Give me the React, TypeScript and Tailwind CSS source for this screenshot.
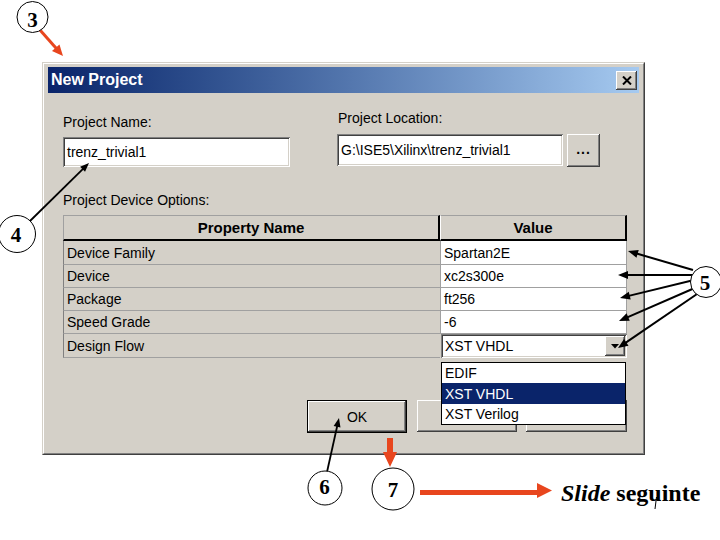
import React from "react";

const raised =
  "bg-[#d4d0c8] shadow-[inset_-1px_-1px_#404040,inset_1px_1px_#ffffff,inset_-2px_-2px_#808080,inset_2px_2px_#d4d0c8]";
const sunken =
  "bg-white shadow-[inset_1px_1px_#808080,inset_-1px_-1px_#ffffff,inset_2px_2px_#404040,inset_-2px_-2px_#d4d0c8]";

function Arrow({
  x1,
  y1,
  x2,
  y2,
  color,
  w,
  len,
  hw,
}: {
  x1: number;
  y1: number;
  x2: number;
  y2: number;
  color: string;
  w: number;
  len: number;
  hw: number;
}) {
  const dx = x2 - x1;
  const dy = y2 - y1;
  const d = Math.sqrt(dx * dx + dy * dy);
  const ux = dx / d;
  const uy = dy / d;
  const bx = x2 - ux * len;
  const by = y2 - uy * len;
  const px = -uy;
  const py = ux;
  const pts = `${x2},${y2} ${bx + px * hw},${by + py * hw} ${bx - px * hw},${by - py * hw}`;
  return (
    <g>
      <line x1={x1} y1={y1} x2={bx + ux * 1} y2={by + uy * 1} stroke={color} strokeWidth={w} />
      <polygon points={pts} fill={color} />
    </g>
  );
}

function Badge({ cx, cy, r, label, tx, ty }: { cx: number; cy: number; r: number; label: string; tx: number; ty: number }) {
  return (
    <g>
      <circle cx={cx} cy={cy} r={r} fill="white" stroke="black" strokeWidth={1} />
      <text
        x={tx}
        y={ty}
        textAnchor="middle"
        fontFamily="'Liberation Serif', 'Times New Roman', serif"
        fontWeight="bold"
        fontSize={21}
        fill="black"
      >
        {label}
      </text>
    </g>
  );
}

const rows: { name: string; value: string; h: string }[] = [
  { name: "Device Family", value: "Spartan2E", h: "h-[24px]" },
  { name: "Device", value: "xc2s300e", h: "h-[23px]" },
  { name: "Package", value: "ft256", h: "h-[23px]" },
  { name: "Speed Grade", value: "-6", h: "h-[23px]" },
];

export default function App() {
  const red = "#e8461e";
  return (
    <div className="relative w-[720px] h-[540px] overflow-hidden bg-white text-black font-['Liberation_Sans',Arial,sans-serif] text-[14px] leading-[16px]">
      <div className="pt-[62px] pl-[42px]">
        {/* dialog */}
        <div className="w-[603px] h-[393px] bg-[#d4d0c8] border border-t-[#d4d0c8] border-l-[#d4d0c8] border-r-[#404040] border-b-[#404040]">
          <div className="h-full border border-t-white border-l-white border-r-[#808080] border-b-[#808080] pt-[3px] px-[4px]">
            {/* title bar */}
            <div className="h-[26px] flex items-center justify-between pl-[3px] pr-[2px] bg-linear-to-r from-[#0a246a] to-[#a6caf0]">
              <span className="text-white font-bold text-[16px]">New Project</span>
              <div className={`w-[21px] h-[19px] flex items-center justify-center ${raised}`}>
                <svg width="10" height="9" viewBox="0 0 10 9">
                  <path d="M1 0.5 L9 8.5 M9 0.5 L1 8.5" stroke="black" strokeWidth="2" />
                </svg>
              </div>
            </div>

            {/* content */}
            <div className="pl-[15px]">
              <div className="flex">
                <div className="w-[227px] pt-[21px]">
                  <div>Project Name:</div>
                  <div className={`mt-[7px] h-[30px] flex items-center pl-[4px] ${sunken}`}>trenz_trivial1</div>
                </div>
                <div className="ml-[47px] pt-[17px]">
                  <div className="pl-[1px]">Project Location:</div>
                  <div className="mt-[8px] flex items-start">
                    <div className={`w-[226px] h-[32px] flex items-center pl-[4px] ${sunken}`}>
                      G:\ISE5\Xilinx\trenz_trivial1
                    </div>
                    <div className={`ml-[4px] w-[33px] h-[33px] flex items-center justify-center font-bold ${raised}`}>
                      <span className="tracking-[1px] -mt-[4px]">...</span>
                    </div>
                  </div>
                </div>
              </div>

              <div className="mt-[25px]">Project Device Options:</div>

              {/* table */}
              <div className="relative mt-[7px] w-[564px]">
                <div className="flex h-[26px]">
                  <div className="w-[377px] flex items-center justify-center font-bold text-[15px] bg-[#d4d0c8] border-t border-l border-t-[#a0a0a0] border-l-[#a0a0a0] border-r-2 border-b-2 border-r-black border-b-black">
                    Property Name
                  </div>
                  <div className="w-[187px] flex items-center justify-center font-bold text-[15px] bg-[#d4d0c8] border-t border-l border-t-[#a0a0a0] border-l-white border-r-2 border-b-2 border-r-black border-b-black">
                    Value
                  </div>
                </div>
                {rows.map((r) => (
                  <div key={r.name} className={`flex ${r.h}`}>
                    <div className="w-[377px] flex items-center pl-[3px] border-l border-b border-l-[#808080] border-b-[#a0a0a0]">
                      {r.name}
                    </div>
                    <div className="w-[187px] flex items-center pl-[3px] bg-white border-l border-b border-r border-l-[#a0a0a0] border-b-[#a0a0a0] border-r-[#a0a0a0]">
                      {r.value}
                    </div>
                  </div>
                ))}
                <div className="flex h-[24px]">
                  <div className="w-[377px] flex items-center pl-[3px] border-l border-b border-l-[#808080] border-b-[#a0a0a0]">
                    Design Flow
                  </div>
                  <div className="w-[187px] pl-[1px]">
                    <div className={`h-full flex items-stretch ${sunken} p-[2px]`}>
                      <div className="flex-1 flex items-center pl-[2px]">XST VHDL</div>
                      <div className={`w-[20px] flex items-center justify-center ${raised}`}>
                        <svg width="8" height="5" viewBox="0 0 8 5">
                          <path d="M0 0 L8 0 L4 4.5 Z" fill="black" />
                        </svg>
                      </div>
                    </div>
                  </div>
                </div>

                {/* open dropdown list */}
                <div className="absolute z-10 left-[378px] top-[147px] w-[185px] h-[63px] bg-white border border-black">
                  <div className="h-[20px] flex items-center pl-[3px]">EDIF</div>
                  <div className="h-[21px] flex items-center pl-[3px] bg-[#0a246a] text-white">XST VHDL</div>
                  <div className="h-[20px] flex items-center pl-[3px]">XST Verilog</div>
                </div>
              </div>

              {/* buttons (the two right ones are covered by the open list) */}
              <div className="mt-[42px] w-[564px] flex justify-end items-start">
                <div className="w-[100px] h-[33px] border border-black">
                  <div className={`h-full flex items-center justify-center ${raised}`}>OK</div>
                </div>
                <div className={`ml-[10px] w-[100px] h-[32px] ${raised}`} />
                <div className={`ml-[9px] w-[101px] h-[32px] ${raised}`} />
              </div>
            </div>
          </div>
        </div>
      </div>

      {/* annotations */}
      <svg className="absolute left-0 top-0 pointer-events-none" width="720" height="540" viewBox="0 0 720 540">
        <Arrow x1={40} y1={30} x2={63} y2={56} color={red} w={3} len={11} hw={5} />
        <Badge cx={32.5} cy={17} r={15.5} label="3" tx={32.5} ty={27} />

        <Arrow x1={30} y1={221} x2={89} y2={163} color="black" w={1.8} len={9} hw={3.5} />
        <Badge cx={17} cy={234} r={18.5} label="4" tx={16} ty={242} />

        <Arrow x1={693} y1={270} x2={628} y2={251} color="black" w={2} len={10} hw={4} />
        <Arrow x1={694} y1={275} x2={618} y2={275} color="black" w={2} len={10} hw={4} />
        <Arrow x1={694} y1={280} x2={620} y2={298} color="black" w={2} len={10} hw={4} />
        <Arrow x1={697} y1={287} x2={619} y2={321} color="black" w={2} len={10} hw={4} />
        <Arrow x1={700} y1={292} x2={618} y2={348} color="black" w={2} len={10} hw={4} />
        <Badge cx={706} cy={282} r={15.5} label="5" tx={705} ty={290} />

        <Arrow x1={327} y1={472} x2={339} y2={418} color="black" w={1.8} len={9} hw={3.5} />
        <Badge cx={325} cy={488} r={17} label="6" tx={324.5} ty={494} />

        <rect x={387} y={438} width={6} height={15} fill={red} />
        <polygon points="383,452 397,452 390,467" fill={red} />
        <Badge cx={393} cy={489} r={21} label="7" tx={393} ty={497} />

        <rect x={420} y={490} width={118} height={5} fill={red} />
        <polygon points="537,483 537,498 552,490.5" fill={red} />

        <line x1={656.5} y1={497} x2={655} y2={509} stroke="black" strokeWidth={1} />
      </svg>

      <div className="absolute left-[561px] top-[481px] text-[24px] leading-[24px] font-bold font-['Liberation_Serif','Times_New_Roman',serif] whitespace-nowrap">
        <span className="italic">Slide</span> seguinte
      </div>
    </div>
  );
}
